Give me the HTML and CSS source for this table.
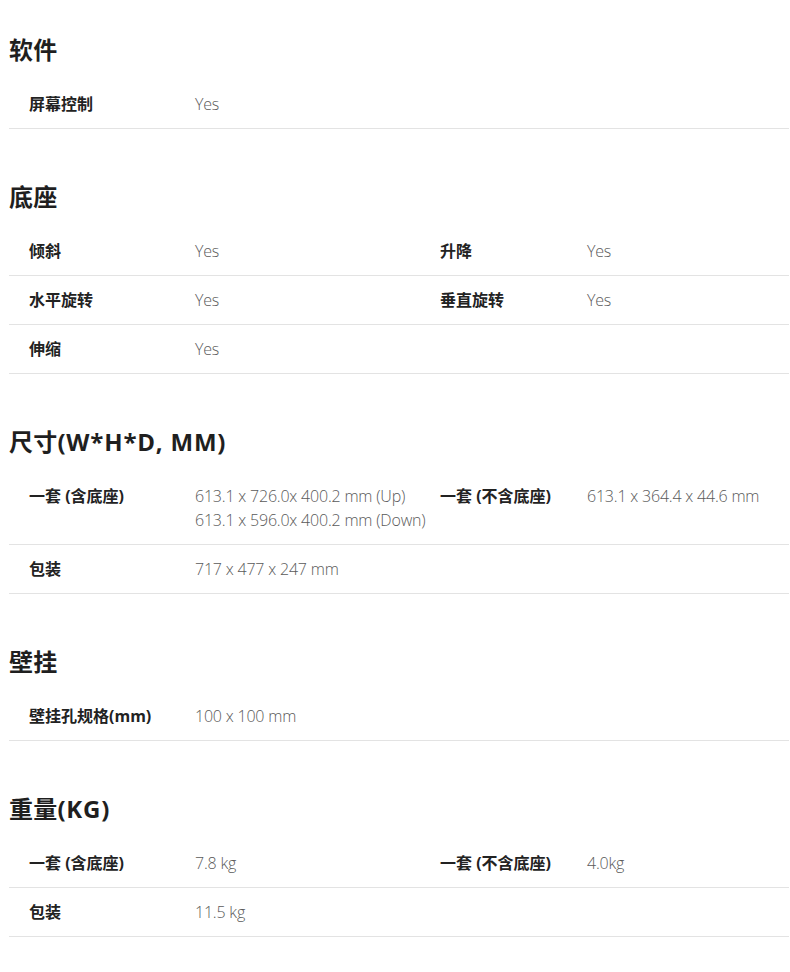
FILE: index.html
```html
<!DOCTYPE html>
<html lang="zh-CN">
<head>
<meta charset="utf-8">
<title>规格</title>
<link rel="stylesheet" href="styles.css">
</head>
<body>
<div class="specs">
  <section class="spec-section">
    <h2 class="spec-title">软件</h2>
    <div class="spec-row">
      <div class="spec-label">屏幕控制</div>
      <div class="spec-value">Yes</div>
    </div>
  </section>

  <section class="spec-section">
    <h2 class="spec-title">底座</h2>
    <div class="spec-row">
      <div class="spec-label">倾斜</div>
      <div class="spec-value">Yes</div>
      <div class="spec-label">升降</div>
      <div class="spec-value">Yes</div>
    </div>
    <div class="spec-row">
      <div class="spec-label">水平旋转</div>
      <div class="spec-value">Yes</div>
      <div class="spec-label">垂直旋转</div>
      <div class="spec-value">Yes</div>
    </div>
    <div class="spec-row">
      <div class="spec-label">伸缩</div>
      <div class="spec-value">Yes</div>
    </div>
  </section>

  <section class="spec-section">
    <h2 class="spec-title"><span>尺寸</span><span class="latin">(W*H*D, MM)</span></h2>
    <div class="spec-row">
      <div class="spec-label">一套 (含底座)</div>
      <div class="spec-value">613.1 x 726.0x 400.2 mm (Up)<br>613.1 x 596.0x 400.2 mm (Down)</div>
      <div class="spec-label">一套 (不含底座)</div>
      <div class="spec-value">613.1 x 364.4 x 44.6 mm</div>
    </div>
    <div class="spec-row">
      <div class="spec-label">包装</div>
      <div class="spec-value">717 x 477 x 247 mm</div>
    </div>
  </section>

  <section class="spec-section">
    <h2 class="spec-title">壁挂</h2>
    <div class="spec-row">
      <div class="spec-label">壁挂孔规格(mm)</div>
      <div class="spec-value">100 x 100 mm</div>
    </div>
  </section>

  <section class="spec-section">
    <h2 class="spec-title"><span>重量</span><span class="latin">(KG)</span></h2>
    <div class="spec-row">
      <div class="spec-label">一套 (含底座)</div>
      <div class="spec-value">7.8 kg</div>
      <div class="spec-label">一套 (不含底座)</div>
      <div class="spec-value">4.0kg</div>
    </div>
    <div class="spec-row">
      <div class="spec-label">包装</div>
      <div class="spec-value">11.5 kg</div>
    </div>
  </section>
</div>
</body>
</html>
```

FILE: styles.css
```css
* { box-sizing: border-box; }
html, body { margin: 0; padding: 0; background: #fff; }
body {
  font-family: "Open Sans", "Noto Sans CJK SC", sans-serif;
  color: #222;
}
.specs {
  padding: 34px 1px 0 9px;
}
.spec-section {
  margin-bottom: 52px;
}
.spec-title {
  margin: 0 0 14px 0;
  font-size: 24px;
  line-height: 32px;
  font-weight: 700;
  color: #1f1f1f;
  letter-spacing: 0.2px;
}
.spec-title .latin {
  letter-spacing: 0.8px;
}
.spec-row {
  display: grid;
  grid-template-columns: 166px 245px 147px 1fr;
  padding: 12px 0 12px 20px;
  border-bottom: 1px solid #e3e3e3;
  font-size: 16px;
  line-height: 24px;
}
.spec-label {
  font-weight: 700;
  color: #222;
}
.spec-value {
  font-weight: 300;
  color: #5a5a5a;
  letter-spacing: -0.2px;
}
```
